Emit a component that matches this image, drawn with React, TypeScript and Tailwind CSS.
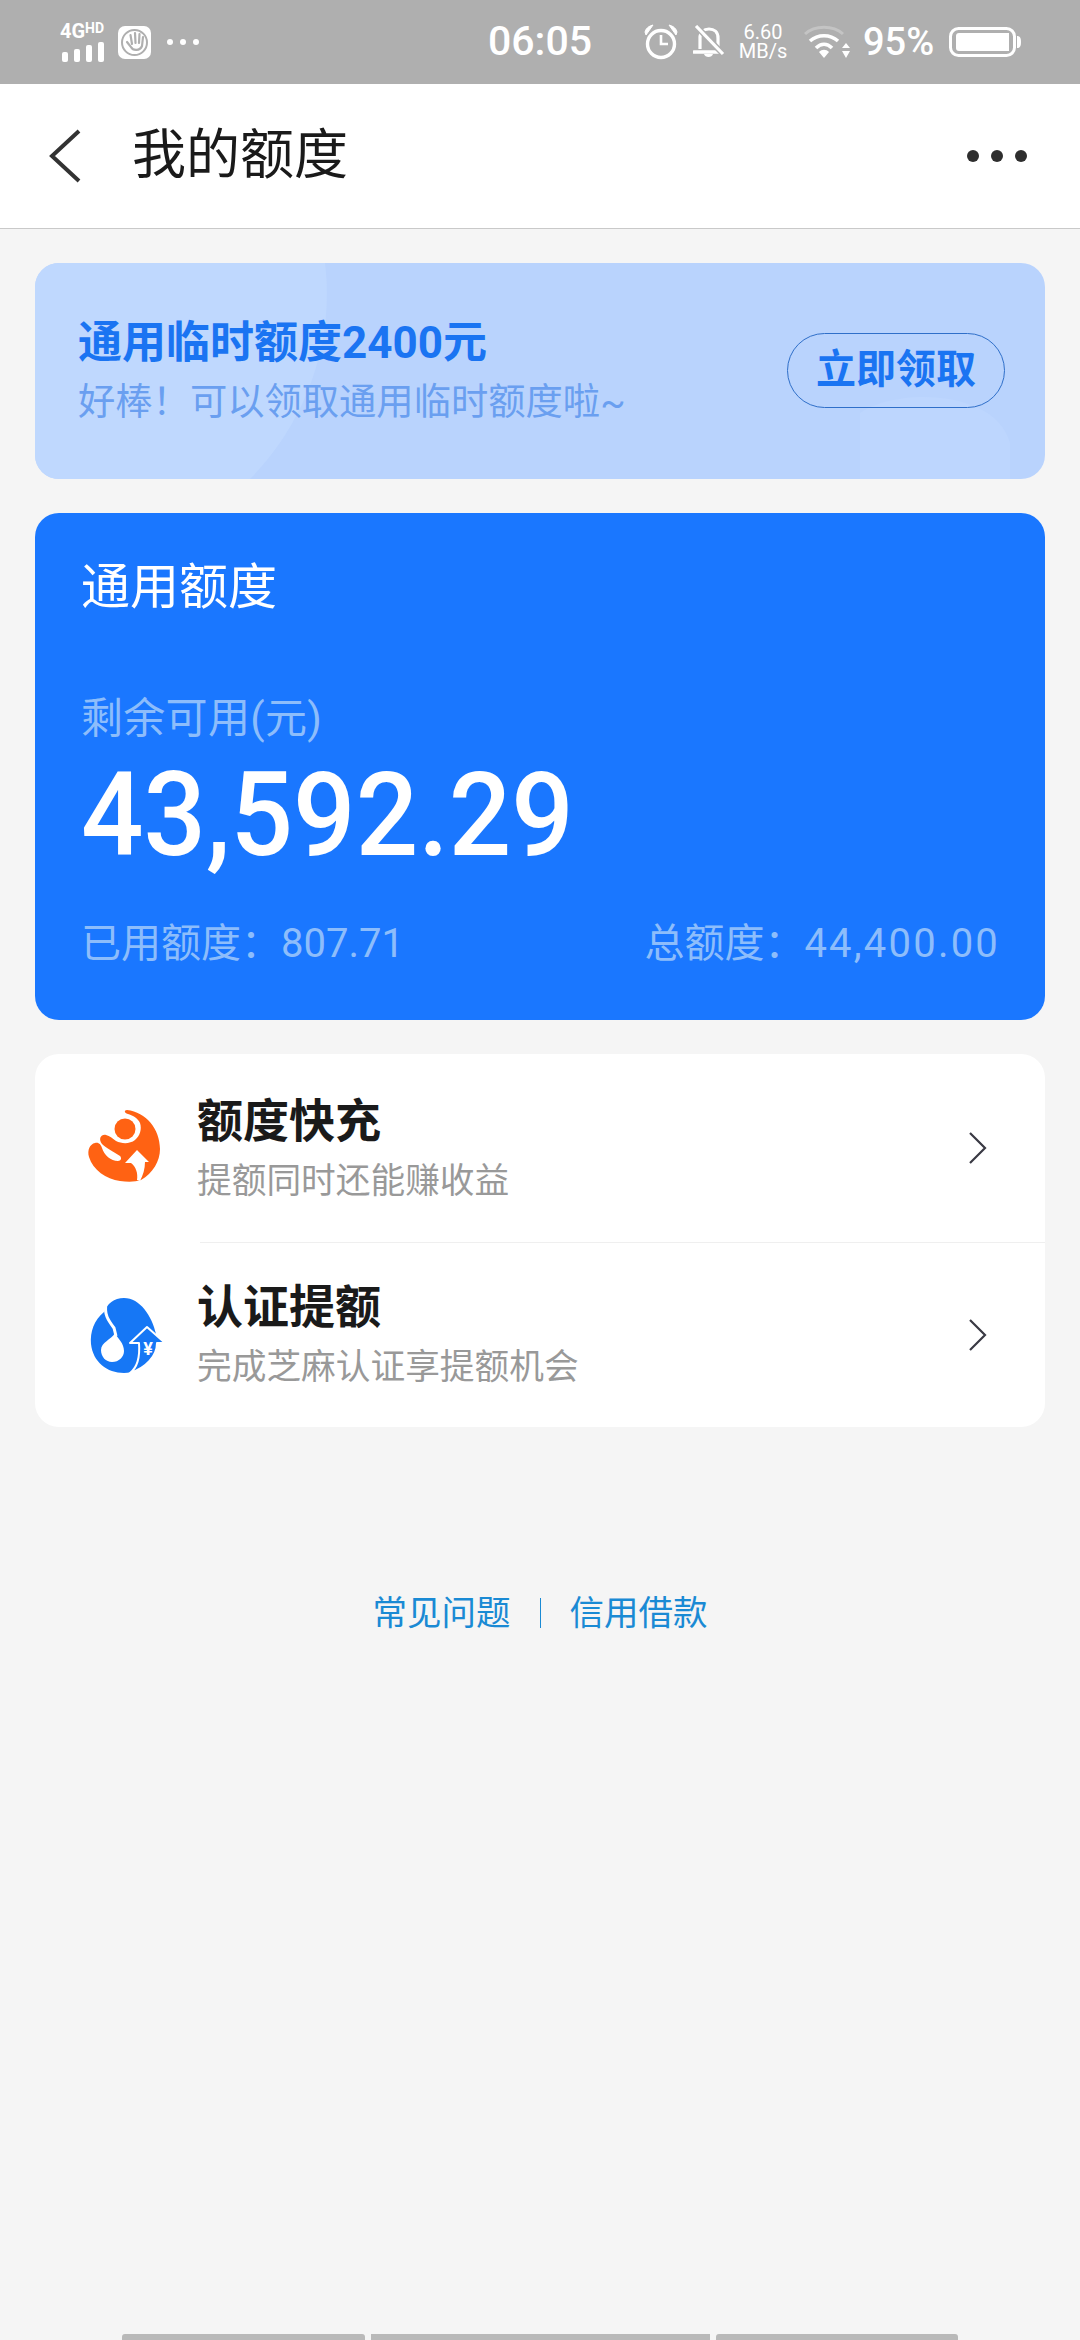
const HeaderBack = () => (
  <svg width="34" height="54" viewBox="0 0 34 54" fill="none">
    <path d="M31 2 L4 27 L31 52" stroke="#333" strokeWidth="4" />
  </svg>
);

const Chevron = () => (
  <svg width="20" height="34" viewBox="0 0 20 34" fill="none">
    <path d="M2 2 L17 17 L2 32" stroke="#3a3a44" strokeWidth="2.2" />
  </svg>
);

const HandIcon = () => (
  <svg width="33" height="33" viewBox="0 0 33 33" fill="none">
    <rect width="33" height="33" rx="7" fill="#fff" />
    <circle cx="16.5" cy="16.5" r="12.5" stroke="#afafaf" strokeWidth="2" />
    <path d="M9 16 L13 21 C15 25 22 25 24 20 L25 11 M14 18 L12.5 9 M17.5 17 L17 7 M21 17 L21.5 8" stroke="#afafaf" strokeWidth="2.2" strokeLinecap="round" />
  </svg>
);

const AlarmIcon = () => (
  <svg width="36" height="36" viewBox="0 0 36 36" fill="none">
    <circle cx="18" cy="20" r="13.5" stroke="#fff" strokeWidth="3.4" />
    <path d="M18 11 V20 H25" stroke="#fff" strokeWidth="2.6" />
    <path d="M2 8 C3 4 6 2 10 1 L3 11 Z M34 8 C33 4 30 2 26 1 L33 11 Z" fill="#fff" stroke="#fff" />
  </svg>
);

const BellOffIcon = () => (
  <svg width="32" height="34" viewBox="0 0 32 34" fill="none">
    <path d="M7 24 V13 C7 7 11 4 16 4 C21 4 25 7 25 13 V24" stroke="#fff" strokeWidth="3.2" />
    <path d="M1 27 H29" stroke="#fff" strokeWidth="3.6" strokeLinecap="round" />
    <path d="M11 29 C12 33 19 33 20 29 Z" fill="#fff" />
    <path d="M3 1 L31 30" stroke="#afafaf" strokeWidth="6" />
    <path d="M3 1 L30 29" stroke="#fff" strokeWidth="3.2" />
  </svg>
);

const WifiIcon = () => (
  <svg width="46" height="34" viewBox="0 0 46 34" fill="none">
    <path d="M1 9 C11 0 29 0 39 9" stroke="#c4c4c4" strokeWidth="3" />
    <path d="M6 16 C14 9 26 9 34 16" stroke="#fff" strokeWidth="3.6" />
    <path d="M12 23 C17 18 23 18 28 23" stroke="#fff" strokeWidth="3.6" />
    <path d="M15 27 C18 24 22 24 25 27 L20 33 Z" fill="#fff" />
    <path d="M42 18 L46 23 H38 Z M38 26 H46 L42 33 Z" fill="#fff" />
  </svg>
);

const BatteryIcon = () => (
  <svg width="72" height="30" viewBox="0 0 72 30" fill="none">
    <rect x="1.5" y="1.5" width="64" height="27" rx="8" stroke="#fff" strokeWidth="3" />
    <path d="M7 9 C7 7 8 6 10 6 H60 V24 H10 C8 24 7 23 7 21 Z" fill="#fff" />
    <path d="M68 9 C71 9 72 11 72 15 C72 19 71 21 68 21 Z" fill="#fff" />
  </svg>
);

const OrangeLogo = () => (
  <svg width="90" height="90" viewBox="0 0 90 90">
    <path
      d="M47 7 C66 9 80 26 80 46 C80 58 73 70 61 77 C55 79 48 79 40 78 C26 76 13 67 9 54 C7 47 10 41 15 40 C19 39 21 42 22 45 C24 52 31 58 38 58 C41 58 42 55 40 53 C34 49 26 45 22 41 C18 36 21 31 26 32 C30 33 32 35 36 38 C42 41 50 41 55 37 C60 33 62 26 60 20 C58 15 52 12 48 11 C44 10 44 7 47 7 Z"
      fill="#ff6213"
    />
    <circle cx="45" cy="26" r="10.5" fill="#ff6213" />
    <path d="M57 47 L69 59 H65 C65 66 63 72 60 78 L57 77 C58 70 56 64 51 60 H45 Z" fill="#fff" />
  </svg>
);

const BlueLogo = () => (
  <svg width="90" height="90" viewBox="0 0 90 90" fill="none">
    <path
      d="M44 8 C60 8 72 26 76 44 C78 66 62 83 44 83 C27 83 13 72 11 54 C10 42 14 30 24 22 C27 14 34 8 44 8 Z"
      fill="#1677f5"
    />
    <path d="M26 14 C24 24 28 30 34 38 L36 46" stroke="#fff" strokeWidth="3" />
    <path d="M35 43 C38 49 44 53 44 61 C44 67 39 72 32 72 C26 72 21 67 21 60 C21 52 31 50 35 43 Z" fill="#fff" />
    <path d="M67 37 L85 53 H77 C77 66 66 78 50 83 C58 77 60 66 59 53 H50 Z" fill="#1677f5" stroke="#fff" strokeWidth="2" strokeLinejoin="round" />
    <text x="68" y="65" textAnchor="middle" fontSize="18" fontWeight="700" fill="#fff">¥</text>
  </svg>
);

const items = [
  { title: "额度快充", sub: "提额同时还能赚收益", logo: <OrangeLogo />, height: "h-[188px]" },
  { title: "认证提额", sub: "完成芝麻认证享提额机会", logo: <BlueLogo />, height: "h-[185px]" },
];

const App = () => {
  return (
    <div className="relative flex flex-col h-[2340px] w-[1080px] overflow-hidden bg-[#f5f5f5] font-['Roboto','Noto_Sans_CJK_SC',sans-serif]">
      {/* status bar */}
      <div className="flex h-[84px] items-center bg-[#afafaf] pl-[60px] text-white">
        <div className="flex w-[46px] flex-col">
          <div className="flex items-start h-[16px] leading-[16px]">
            <span className="text-[20px] font-bold leading-[16px]">4G</span>
            <span className="text-[14px] font-bold leading-[10px]">HD</span>
          </div>
          <div className="ml-[2px] mt-[3px] flex items-end gap-[6px]">
            <div className="h-[10px] w-[6px] rounded-[2px] bg-white" />
            <div className="h-[13px] w-[6px] rounded-[2px] bg-white" />
            <div className="h-[17px] w-[6px] rounded-[2px] bg-white" />
            <div className="h-[20px] w-[6px] rounded-[2px] bg-white" />
          </div>
        </div>
        <div className="ml-[12px]">
          <HandIcon />
        </div>
        <div className="ml-[16px] flex gap-[7px]">
          <div className="h-[6px] w-[6px] rounded-full bg-white" />
          <div className="h-[6px] w-[6px] rounded-full bg-white" />
          <div className="h-[6px] w-[6px] rounded-full bg-white" />
        </div>
        <div className="ml-[289px] w-[102px] whitespace-nowrap text-[41px] font-medium">06:05</div>
        <div className="ml-[53px]">
          <AlarmIcon />
        </div>
        <div className="ml-[14px]">
          <BellOffIcon />
        </div>
        <div className="ml-[14px] flex w-[48px] flex-col items-center text-[20px] leading-[19px]">
          <span>6.60</span>
          <span>MB/s</span>
        </div>
        <div className="ml-[17px]">
          <WifiIcon />
        </div>
        <div className="ml-[13px] text-[38px] font-medium">95%</div>
        <div className="ml-[15px]">
          <BatteryIcon />
        </div>
      </div>

      {/* header */}
      <div className="flex h-[145px] items-center border-b border-[#c9c9c9] bg-white pl-[48px] pr-[53px]">
        <HeaderBack />
        <div className="ml-[50px] text-[54px] leading-[60px] text-[#1a1a1a]">我的额度</div>
        <div className="ml-auto flex gap-[12px]">
          <div className="h-[12px] w-[12px] rounded-full bg-[#2e2e2e]" />
          <div className="h-[12px] w-[12px] rounded-full bg-[#2e2e2e]" />
          <div className="h-[12px] w-[12px] rounded-full bg-[#2e2e2e]" />
        </div>
      </div>

      <div className="flex flex-col px-[35px] pt-[34px]">
        {/* temp credit banner */}
        <div className="relative flex h-[216px] items-center overflow-hidden rounded-[24px] bg-[#b9d3fd] pl-[43px] pr-[40px]">
          <svg className="absolute inset-0" width="1010" height="216" viewBox="0 0 1010 216">
            <path d="M0 0 H290 C300 80 270 160 215 216 H0 Z" fill="#bfd8fe" />
            <path d="M825 216 V150 C860 125 960 125 975 180 L975 216 Z" fill="#bdd6fe" />
          </svg>
          <div className="relative flex flex-col">
            <div className="text-[44px] font-bold leading-[56px] text-[#1a74f2]">通用临时额度2400元</div>
            <div className="mt-[6px] text-[37.3px] leading-[50px] text-[#6a9ff0]">好棒！可以领取通用临时额度啦~</div>
          </div>
          <div className="relative mb-[2px] ml-auto flex h-[75px] w-[218px] items-center justify-center rounded-full border border-[#2f6fc9] text-[40px] font-bold text-[#1a74f2]">
            立即领取
          </div>
        </div>

        {/* general credit */}
        <div className="mt-[34px] flex h-[507px] flex-col rounded-[24px] bg-[#1a77ff] pl-[46px] pr-[45px]">
          <div className="mt-[42px] text-[49px] leading-[66px] text-white">通用额度</div>
          <div className="mt-[70px] text-[42px] tracking-[0.3px] leading-[56px] text-[#8dbdfb]">剩余可用(元)</div>
          <div className="mt-[8px] origin-left scale-x-[0.94] text-[117px] font-medium leading-[120px] text-white">43,592.29</div>
          <div className="mt-[44px] flex justify-between text-[40px] leading-[50px] text-[#8dbdfb]">
            <span>已用额度：807.71</span>
            <span>
              总额度：<span className="tracking-[2.2px]">44,400.00</span>
            </span>
          </div>
        </div>

        {/* actions */}
        <div className="mt-[34px] rounded-[24px] bg-white">
          {items.map((item, i) => (
            <div key={i} className={`relative flex items-center pl-[45px] ${item.height}`}>
              {i > 0 && <div className="absolute left-[165px] right-0 top-0 h-px bg-[#efefef]" />}
              <div className="flex h-[90px] w-[90px] items-center">{item.logo}</div>
              <div className="ml-[27px] flex flex-col">
                <div className="text-[46px] font-bold leading-[60px] text-[#1a1a1a]">{item.title}</div>
                <div className="mt-[5px] text-[34.7px] leading-[50px] text-[#999999]">{item.sub}</div>
              </div>
              <div className="ml-auto mr-[57px]">
                <Chevron />
              </div>
            </div>
          ))}
        </div>

        {/* links */}
        <div className="mt-[161px] flex items-center justify-center text-[34.5px] leading-[50px] text-[#1a8ad4]">
          <span>常见问题</span>
          <div className="mx-[29px] h-[30px] w-px bg-[#1a8ad4]" />
          <span>信用借款</span>
        </div>
      </div>

      {/* bottom strip */}
      <div className="mt-auto flex justify-center gap-[6px]">
        <div className="h-[6px] w-[243px] rounded-t-[3px] bg-[#b9b9b9]" />
        <div className="h-[6px] w-[339px] bg-[#b9b9b9]" />
        <div className="h-[6px] w-[242px] rounded-t-[3px] bg-[#b9b9b9]" />
      </div>
    </div>
  );
};

export default App;
